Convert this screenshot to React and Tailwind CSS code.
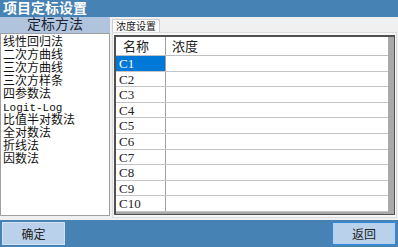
const methods = [
  "线性回归法",
  "二次方曲线",
  "三次方曲线",
  "三次方样条",
  "四参数法",
  "Logit-Log",
  "比值半对数法",
  "全对数法",
  "折线法",
  "因数法",
];

const rows = ["C1", "C2", "C3", "C4", "C5", "C6", "C7", "C8", "C9", "C10"];

const cjk = "font-['Liberation_Serif','Noto_Sans_CJK_SC',serif]";

export default function App() {
  return (
    <div className={`w-[398px] h-[247px] bg-[#F0F0F0] flex flex-col overflow-hidden ${cjk}`}>
      {/* title */}
      <div className="h-[17px] bg-[#4682B4] text-white font-bold text-[14px] leading-[17px] pl-[3px]">
        项目定标设置
      </div>

      <div className="flex-1 flex min-h-0">
        {/* left: method list */}
        <div className="w-[110px] flex flex-col pb-[4px]">
          <div className="h-[16px] bg-[#B0C4DE] text-center text-[14px] leading-[16px] text-[#1c2434]">
            定标方法
          </div>
          <div className="flex-1 bg-white border border-[#A0A0A0] pl-[2px] pt-[2px]">
            {methods.map((m) => (
              <div key={m} className="h-[13px] text-[12px] leading-[13px] text-[#111] whitespace-nowrap">
                {m === "Logit-Log" ? (
                  <span className="font-['Liberation_Mono',monospace] text-[11px] leading-[13px]">{m}</span>
                ) : (
                  m
                )}
              </div>
            ))}
          </div>
        </div>

        {/* right: tab + grid */}
        <div className="flex-1 flex flex-col pl-[2px] pt-[2px] pr-[1px] pb-[2px]">
          <div className="flex">
            <div className="h-[13px] px-[3px] bg-white border border-b-0 border-[#D0D0D0] text-[10px] leading-[12px] text-[#222] font-['Noto_Sans_CJK_SC',sans-serif]">
              浓度设置
            </div>
          </div>
          <div className="flex-1 border border-[#DCDCDC] bg-[#F7F7F7] pl-[1px] pt-[2px] pr-[1px] pb-[2px] flex">
            <div className="flex-1 border-l-2 border-t-2 border-r border-b border-[#505050] bg-[#A9A9A9] flex flex-col">
              <div className="bg-white mr-[6px] flex flex-col">
                <div className="h-[19px] flex border-b border-[#C0C0C0] text-[13px] leading-[19px] text-[#222]">
                  <div className="w-[50px] border-r border-[#A0A0A0] pl-[7px]">名称</div>
                  <div className="flex-1 pl-[6px]">浓度</div>
                </div>
                {rows.map((r, i) => (
                  <div
                    key={r}
                    className="h-[15.6px] flex border-b border-[#C4C4C4] text-[13px] leading-[15px] text-[#222]"
                  >
                    <div
                      className={`w-[50px] border-r border-[#A0A0A0] pl-[3px] ${
                        i === 0 ? "bg-[#0078D7] text-white" : ""
                      }`}
                    >
                      {r}
                    </div>
                    <div className="flex-1" />
                  </div>
                ))}
              </div>
            </div>
          </div>
        </div>
      </div>

      {/* bottom bar */}
      <div className="h-[27px] bg-[#4682B4] flex items-center justify-between px-[2px] font-['Noto_Sans_CJK_SC',sans-serif]">
        <button className="w-[63px] h-[23px] bg-[#BAD1EB] border border-[#D2E1F2] text-[12px] text-[#222]">
          确定
        </button>
        <button className="w-[64px] h-[23px] bg-[#BAD1EB] border border-[#2D8CE0] text-[12px] text-[#222]">
          返回
        </button>
      </div>
    </div>
  );
}
